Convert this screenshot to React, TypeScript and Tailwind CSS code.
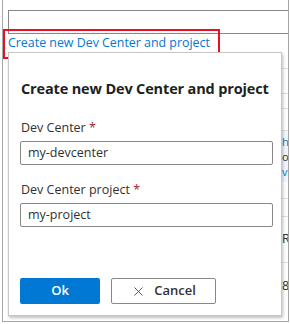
import { X } from "lucide-react";

const font = { fontFamily: '"Open Sans", "Noto Sans", sans-serif' };

function Field({ label, value }: { label: string; value: string }) {
  return (
    <div className="flex flex-col gap-[4px]">
      <div className="h-[18px] pl-[1px] text-[12.5px] leading-[18px] text-[#323130]">
        {label} <span className="text-[#a4262c]">*</span>
      </div>
      <div className="flex h-[24px] w-[253px] items-center rounded-[2px] border border-[#8a8886] px-[7px] text-[12.5px] text-[#323130]">
        {value}
      </div>
    </div>
  );
}

export default function App() {
  return (
    <div className="relative h-[324px] w-[290px] overflow-hidden bg-white" style={font}>
      {/* page behind the dialog */}
      <div className="ml-[2px] flex h-[322px] w-[287px] flex-col overflow-hidden border-x border-b border-[#a6a6a6] pl-[5px]">
        <div className="mt-[10px] h-[24px] border-y border-l border-[#8a8886]" />
        <div className="h-[34px]" />
        <div className="h-[25px] border-t border-[#e1dfdd]" />
        <div className="h-[15px] border-t border-[#e1dfdd]" />
        <div className="h-[22px] border-t border-[#e1dfdd]" />
        <div className="flex h-[52px] flex-col border-t border-[#e1dfdd] bg-[#eff6fc] pl-[274px] pt-[3px] text-[11px] leading-[15px]">
          <span className="text-[#0078d4]">he</span>
          <span className="text-[#323130]">o</span>
          <span className="text-[#0078d4]">v</span>
        </div>
        <div className="h-[16px]" />
        <div className="h-[18px] border-t border-[#e1dfdd]" />
        <div className="flex h-[46px] items-center border-t border-[#e1dfdd] pl-[274px] text-[12.5px] text-[#323130]">
          R
        </div>
        <div className="flex h-[48px] items-center border-t border-[#e1dfdd] pl-[274px] text-[12.5px] text-[#323130]">
          8
        </div>
      </div>

      {/* link + highlight */}
      <a className="absolute left-[8px] top-[33px] whitespace-nowrap text-[12.4px] leading-[20px] text-[#0078d4]">
        Create new Dev Center and project
      </a>
      <div className="absolute left-[3px] top-[29px] h-[30px] w-[217px] border-2 border-[#e81123]" />

      {/* dialog */}
      <div className="absolute left-[8px] top-[52px] flex h-[264px] w-[274px] flex-col border border-[#c8c6c4] bg-white px-[11px] shadow-[1px_2px_3px_rgba(0,0,0,0.25)]">
        <h2 className="mt-[25px] h-[22px] whitespace-nowrap pl-[1px] text-[14.5px] font-bold leading-[22px] tracking-[-0.15px] text-[#201f1e]">
          Create new Dev Center and project
        </h2>
        <div className="mt-[19px] flex flex-col gap-[16px]">
          <Field label="Dev Center" value="my-devcenter" />
          <Field label="Dev Center project" value="my-project" />
        </div>
        <div className="mt-[51px] flex gap-[11px]">
          <button className="flex h-[26px] w-[80px] items-center justify-center rounded-[2px] bg-[#0078d4] text-[13px] font-semibold text-white">
            Ok
          </button>
          <button className="flex h-[26px] w-[105px] items-center justify-center gap-[8px] rounded-[2px] border border-[#8a8886] bg-white text-[13px] font-semibold text-[#323130]">
            <X size={15} strokeWidth={1.3} />
            Cancel
          </button>
        </div>
      </div>
    </div>
  );
}
